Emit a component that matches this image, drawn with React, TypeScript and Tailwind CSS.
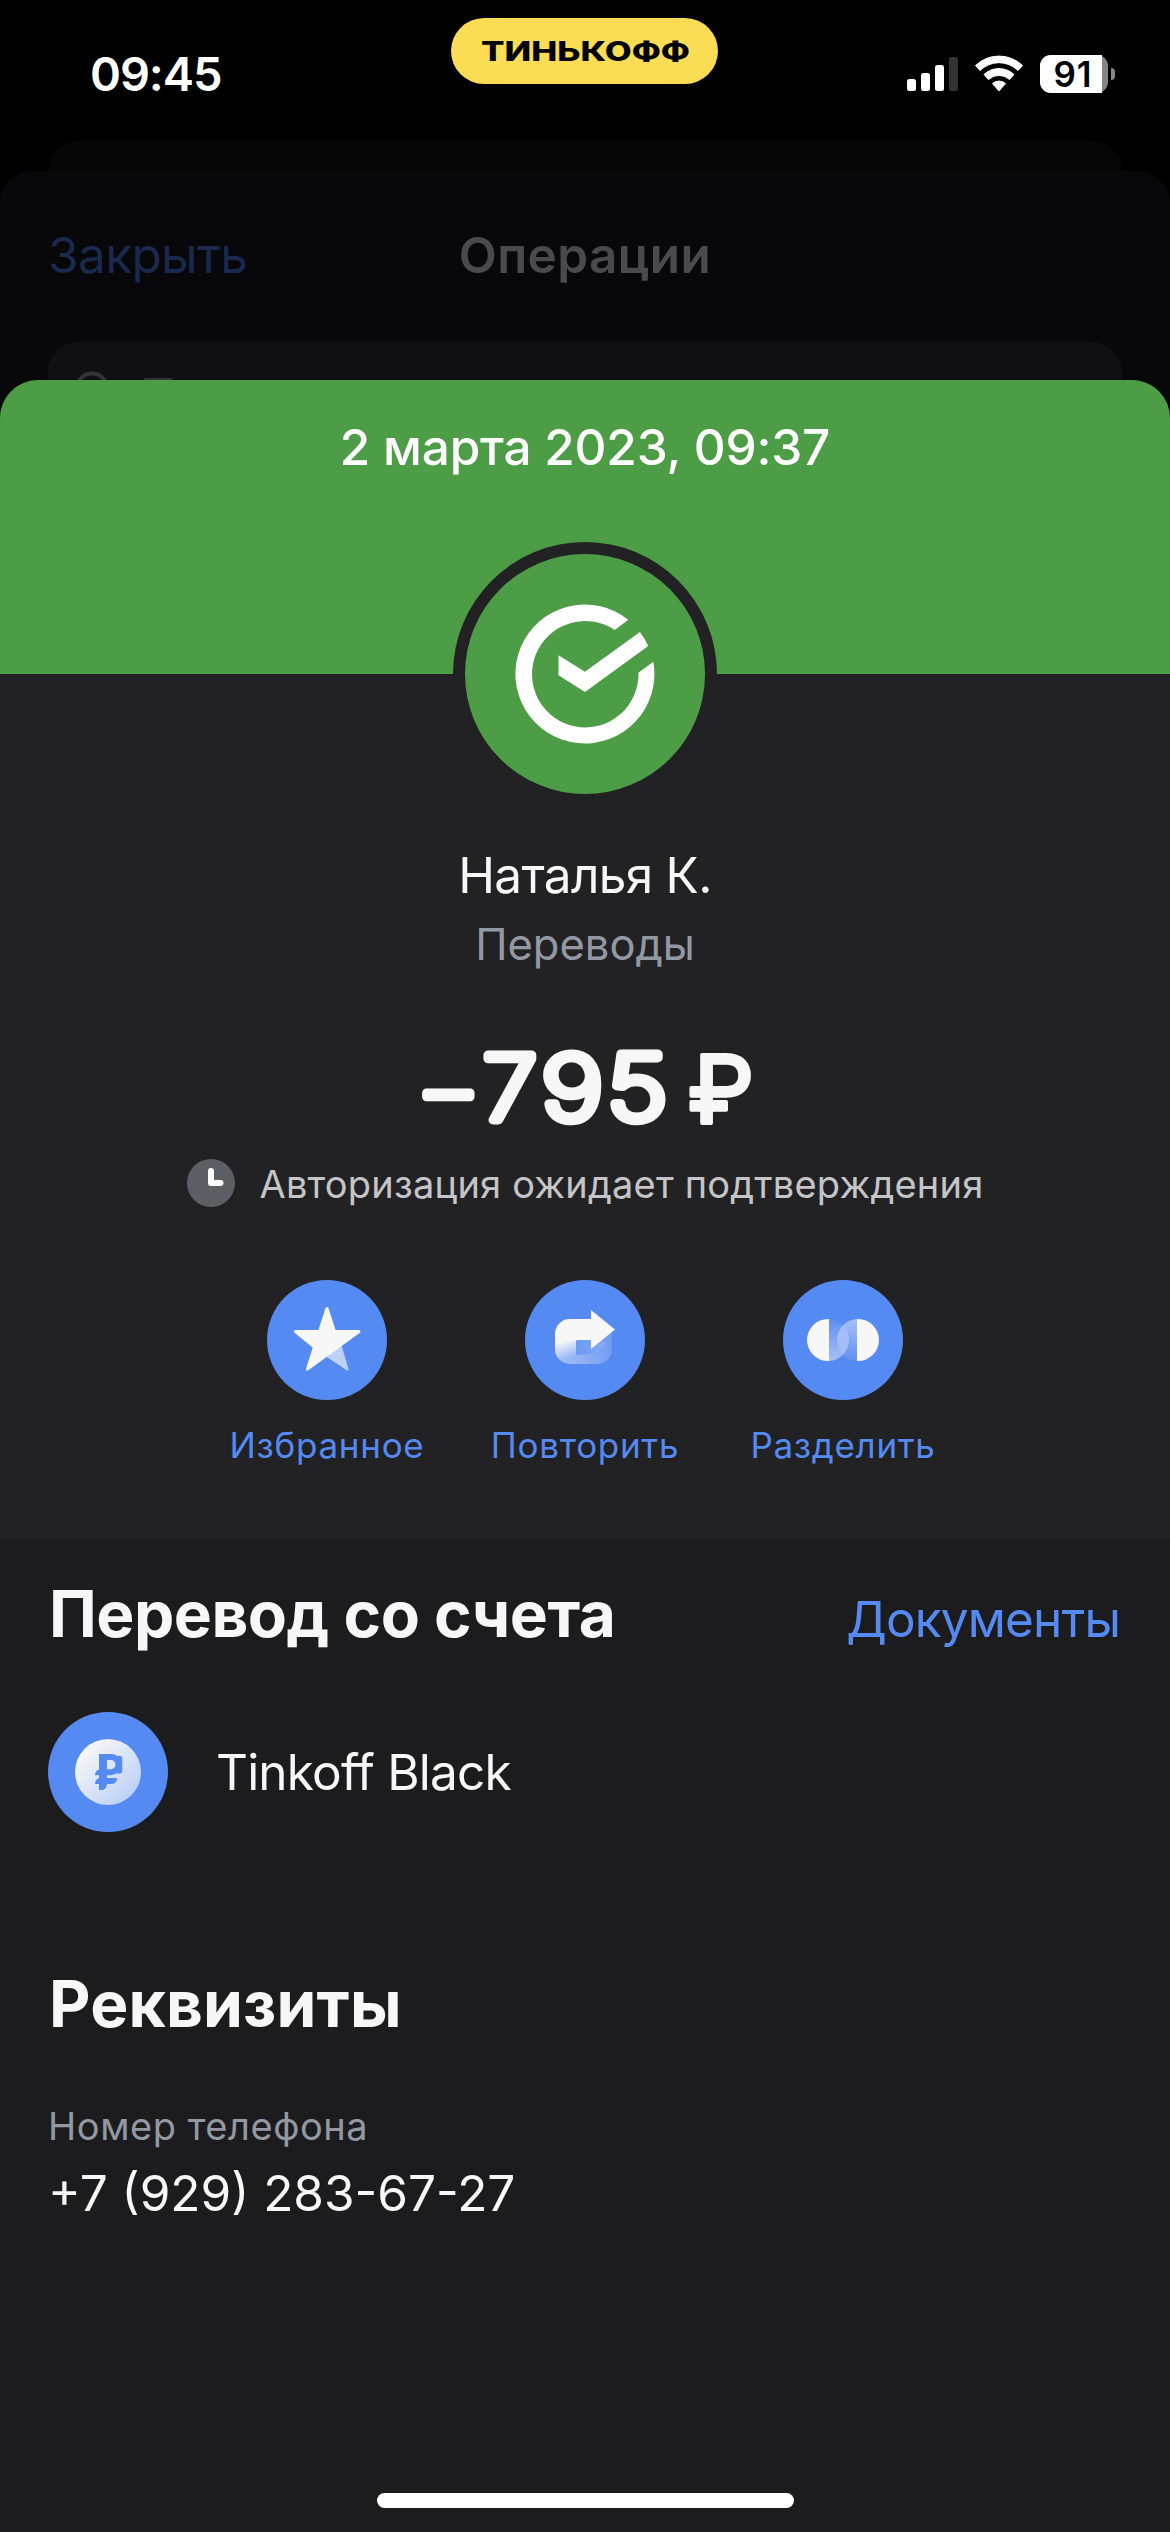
import { clsx } from "clsx";
import type { ReactNode } from "react";

function StarIcon() {
  return (
    <svg className="w-[120px] h-[120px]" viewBox="0 0 120 120">
      <path
        d="M74 67 L80.500 89.500 L60 76 Z"
        fill="#bed1f6"
        stroke="#bed1f6"
        strokeWidth="2"
        strokeLinejoin="round"
      />
      <path
        d="M60 28.500 L67.500 51.500 L92 51.500 L40.500 89 L47.500 67 L28.500 51.500 L52.500 51.500 Z"
        fill="#f7f7f8"
        stroke="#f7f7f8"
        strokeWidth="3"
        strokeLinejoin="round"
      />
    </svg>
  );
}

function RepeatIcon() {
  return (
    <svg className="w-[120px] h-[120px]" viewBox="0 0 120 120">
      <defs>
        <linearGradient id="repeat-loop" gradientUnits="userSpaceOnUse" x1="34" y1="84" x2="88" y2="62">
          <stop offset="0" stopColor="#a5bff5" />
          <stop offset="1" stopColor="#6d9af3" />
        </linearGradient>
        <linearGradient id="repeat-hole" gradientUnits="userSpaceOnUse" x1="51" y1="70" x2="80" y2="66">
          <stop offset="0" stopColor="#6a98f4" />
          <stop offset="1" stopColor="#86abf4" />
        </linearGradient>
        <linearGradient id="repeat-fade" gradientUnits="userSpaceOnUse" x1="42" y1="60" x2="46" y2="77">
          <stop offset="0" stopColor="#f7f7f8" />
          <stop offset="1" stopColor="#f7f7f8" stopOpacity="0" />
        </linearGradient>
      </defs>
      <rect x="30" y="39" width="57" height="45" rx="15" fill="url(#repeat-loop)" />
      <path d="M51 75 V62 Q51 60 53 60 H70 L80 62 Q76 74 64 74 Z" fill="url(#repeat-hole)" />
      <path d="M30 60 H51 V80 H34 Q30 76 30 69 Z" fill="url(#repeat-fade)" />
      <path
        d="M30 60.500 V54 A15 15 0 0 1 45 39 H66 V30 L90 49.500 L66 69 V60 H53 L51 60.500 Z"
        fill="#f7f7f8"
      />
    </svg>
  );
}

function SplitIcon() {
  return (
    <svg className="w-[120px] h-[120px]" viewBox="0 0 120 120">
      <defs>
        <linearGradient id="split-left" x1="0" y1="0" x2="0" y2="1">
          <stop offset="0" stopColor="#f7f7f8" stopOpacity="0.05" />
          <stop offset="1" stopColor="#f7f7f8" stopOpacity="0.5" />
        </linearGradient>
        <linearGradient id="split-right" x1="0" y1="1" x2="0" y2="0">
          <stop offset="0" stopColor="#f7f7f8" stopOpacity="0.05" />
          <stop offset="1" stopColor="#f7f7f8" stopOpacity="0.5" />
        </linearGradient>
      </defs>
      <path d="M45 39 A21 21 0 0 1 45 81 Z" fill="url(#split-left)" />
      <path d="M75 39 A21 21 0 0 0 75 81 Z" fill="url(#split-right)" />
      <path d="M46 39 H45 A21 21 0 0 0 45 81 H46 Z" fill="#f7f7f8" />
      <path d="M74 39 H75 A21 21 0 0 1 75 81 H74 Z" fill="#f7f7f8" />
    </svg>
  );
}

const actions = [
  { label: "Избранное", icon: StarIcon },
  { label: "Повторить", icon: RepeatIcon },
  { label: "Разделить", icon: SplitIcon },
];

// x offset and horizontal stretch of each rounded glyph
const amountGlyphs = [
  { char: "–", x: 426.5, y: 1122.5, stretch: 0.97 },
  { char: "7", x: 482.8, y: 1120, stretch: 1.09 },
  { char: "9", x: 541.3, y: 1120, stretch: 1.18 },
  { char: "5", x: 607.1, y: 1120, stretch: 1.16 },
];

function StatusBar() {
  return (
    <header className="h-[141px] flex items-start justify-between pl-[90px] pr-[55px]">
      <span className="w-[361px] pt-[51px] text-[47px] leading-[46px] font-semibold tracking-[-1.1px] text-white">
        09:45
      </span>
      <div className="mt-[18px] w-[267px] h-[66px] rounded-full bg-[#fadd55] flex items-center justify-center">
        <svg className="w-[212px] h-[40px]" viewBox="0 -5 212 40">
          <text
            x="2"
            y="24.500"
            textLength="209"
            lengthAdjust="spacingAndGlyphs"
            className="text-[26.500px] font-extrabold fill-black"
          >
            ТИНЬКОФФ
          </text>
        </svg>
      </div>
      <div className="w-[397px] pt-[55px] flex justify-end items-start">
        <svg className="w-[51px] h-[38px]" viewBox="0 0 51 38">
          <rect x="0" y="24" width="9" height="12" rx="2.500" fill="#fff" />
          <rect x="14" y="18" width="9" height="18" rx="2.500" fill="#fff" />
          <rect x="28" y="10" width="9" height="26" rx="2.500" fill="#fff" />
          <rect x="42" y="2" width="9" height="34" rx="2.500" fill="#333" />
        </svg>
        <svg className="w-12 h-[38px] ml-[17px]" viewBox="0 0 48 38">
          <path d="M0.500 10.500 A34 34 0 0 1 47.500 10.500 L43 15.500 A27 27 0 0 0 5 15.500 Z" fill="#fff" stroke="#fff" strokeLinejoin="round" />
          <path d="M9 19.500 A22 22 0 0 1 39 19.500 L34.500 24.500 A15.500 15.500 0 0 0 13.500 24.500 Z" fill="#fff" stroke="#fff" strokeLinejoin="round" />
          <path d="M17.500 28.500 A10 10 0 0 1 30.500 28.500 L24 36 Z" fill="#fff" stroke="#fff" strokeLinejoin="round" />
        </svg>
        <div className="ml-[17px] w-[68px] h-[38px] rounded-[11px] bg-[#858585] flex">
          <div className="w-[62px] h-full rounded-l-[11px] bg-white flex items-center justify-center pl-1">
            <span className="text-[35px] leading-[44px] font-semibold tracking-[1px] text-black">91</span>
          </div>
        </div>
        <div className="ml-[3px] mt-[13px] w-1 h-3 rounded-r-full bg-[#858585]" />
      </div>
    </header>
  );
}

function OperationsSheet() {
  return (
    <div className="h-[260px] shrink-0 rounded-t-[32px] bg-[#08080a] px-12">
      <div className="h-[171px] flex items-center justify-between pb-[3px]">
        <span className="w-[300px] text-[49.500px] tracking-[-0.6px] text-[#1a2a4e]">Закрыть</span>
        <span className="text-[49.500px] font-semibold tracking-[0.4px] text-[#4a4a4c]">Операции</span>
        <span className="w-[300px]" />
      </div>
      <div className="h-[89px] rounded-t-[30px] bg-[#101012] flex items-start pl-[26px]">
        <svg className="mt-[29px] w-[50px] h-[50px]" viewBox="0 0 50 50">
          <circle cx="18" cy="18" r="15.500" fill="none" stroke="#333336" strokeWidth="4" />
          <path d="M29 29 L40 40" stroke="#333336" strokeWidth="4" />
        </svg>
        <span className="mt-[24px] ml-[16px] text-[49.500px] leading-[60px] text-[#333336]">Поиск</span>
      </div>
    </div>
  );
}

function CheckLogo() {
  return (
    <svg className="w-[264px] h-[264px]" viewBox="0 0 264 264">
      <circle cx="132" cy="132" r="132" fill="#222224" />
      <circle cx="132" cy="132" r="120" fill="#4c9d45" />
      <path
        d="M175.300 77.700 A69.500 69.500 0 1 0 200.300 119.700 L185.400 130.700 A53.200 53.200 0 1 1 161.800 88 Z"
        fill="#fff"
      />
      <path
        d="M105.500 113.300 L132 129.700 L186.900 90 Q192 96.500 195.200 104 L132 150 L105.500 133.300 Z"
        fill="#fff"
      />
    </svg>
  );
}

function Amount() {
  return (
    <svg className="w-[400px] h-[130px]" viewBox="385 1022 400 130" aria-label="–795 ₽">
      <g fill="#f7f7f8" stroke="#f7f7f8" strokeLinejoin="round">
        {amountGlyphs.map((glyph) => (
          <text
            key={glyph.char}
            transform={`translate(${glyph.x} ${glyph.y}) scale(${glyph.stretch} 1)`}
            strokeWidth="9"
            className="text-[90px] font-extralight"
          >
            {glyph.char}
          </text>
        ))}
        <text x="688" y="1122.500" strokeWidth="4" className="text-[94px] font-normal">
          ₽
        </text>
      </g>
    </svg>
  );
}

function SectionTitle({ children, className }: { children: ReactNode; className?: string }) {
  return (
    <h2 className={clsx("pl-px text-[64px] leading-[80px] font-bold text-[#f7f7f8]", className)}>
      {children}
    </h2>
  );
}

export default function App() {
  return (
    <div className="w-[1170px] h-[2532px] overflow-hidden bg-black flex flex-col font-['Inter','Liberation_Sans',sans-serif]">
      <StatusBar />
      <div className="h-[70px] shrink-0 mx-12 -mb-10 rounded-t-[30px] bg-[#060606]" />
      <OperationsSheet />

      <main className="relative -mt-[51px] flex-1 rounded-t-[38px] overflow-hidden bg-[#1c1c1e] flex flex-col">
        {/* Operation summary */}
        <section className="h-[1158px] shrink-0 bg-[#222224] flex flex-col items-center">
          <div className="w-full h-[294px] shrink-0 bg-[#4c9d45] flex flex-col items-center">
            <p className="mt-[37px] text-[49.500px] leading-[60px] font-medium tracking-[-0.2px] text-white">
              2 марта 2023, 09:37
            </p>
          </div>
          <div className="-mt-[132px] shrink-0">
            <CheckLogo />
          </div>
          <p className="mt-[39px] text-[49.500px] leading-[60px] tracking-[-0.7px] text-[#f7f7f8]">Наталья К.</p>
          <p className="mt-[11px] text-[43.500px] leading-[56px] text-[#9299a2]">Переводы</p>
          <div className="mt-[50px]">
            <Amount />
          </div>
          <div className="mt-[7px] h-12 flex items-center gap-[25px]">
            <svg className="w-12 h-12" viewBox="0 0 48 48">
              <circle cx="24" cy="24" r="24" fill="#5c5f64" />
              <path d="M24 12 V24 H33.500" fill="none" stroke="#fff" strokeWidth="6" strokeLinecap="round" strokeLinejoin="round" />
            </svg>
            <span className="pt-[2px] text-[38px] tracking-[0.2px] text-[#c5c5c8]">
              Авторизация ожидает подтверждения
            </span>
          </div>
          <div className="mt-[73px] flex">
            {actions.map((action) => (
              <button key={action.label} className="w-[258px] flex flex-col items-center">
                <span className="rounded-full bg-[#568af3]">
                  <action.icon />
                </span>
                <span className="mt-[23px] text-[35px] leading-[44px] tracking-[0.7px] text-[#568af3]">
                  {action.label}
                </span>
              </button>
            ))}
          </div>
        </section>

        {/* Account */}
        <section className="px-12 pt-[36px]">
          <div className="flex justify-between">
            <SectionTitle className="tracking-[-0.5px]">Перевод со счета</SectionTitle>
            <a className="pt-[15px] pr-[2px] text-[49.500px] leading-[60px] tracking-[-0.85px] text-[#568af3]">
              Документы
            </a>
          </div>
          <div className="mt-[58px] h-[120px] flex items-center">
            <svg className="w-[120px] h-[120px]" viewBox="0 0 120 120">
              <defs>
                <linearGradient id="coin" x1="0.15" y1="0.15" x2="0.85" y2="0.85">
                  <stop offset="0" stopColor="#f7f7f8" />
                  <stop offset="1" stopColor="#bed1f6" />
                </linearGradient>
              </defs>
              <circle cx="60" cy="60" r="60" fill="#568af3" />
              <circle cx="60" cy="60" r="33" fill="url(#coin)" />
              <g fill="none" stroke="#568af3">
                <path d="M55 45 H63 A7.500 7.500 0 0 1 63 60.200 H52" strokeWidth="6" />
                <path d="M71 47 V58.500" strokeWidth="6.500" strokeLinecap="round" />
              </g>
              <g fill="#568af3">
                <path d="M51 42 H59 V72 Q58.500 78 53 78 H51 Z" />
                <path d="M47 63.200 Q47 57.200 53 57.200 H56 V63.200 Z" />
                <path d="M47 72 Q47 66 53 66 H69 Q69 72 63 72 Z" />
              </g>
            </svg>
            <span className="ml-12 pt-px text-[49.500px] tracking-[-0.8px] text-[#f7f7f8]">Tinkoff Black</span>
          </div>
        </section>

        {/* Requisites */}
        <section className="px-12 pt-[132px]">
          <SectionTitle className="tracking-[0.2px]">Реквизиты</SectionTitle>
          <p className="mt-[57px] text-[38px] leading-[50px] tracking-[0.55px] text-[#9299a2]">Номер телефона</p>
          <p className="mt-[12px] text-[49.500px] leading-[60px] text-[#f7f7f8]">+7 (929) 283-67-27</p>
        </section>

        <div className="mt-auto mb-6 mx-auto w-[417px] h-[15px] rounded-full bg-white" />
      </main>
    </div>
  );
}
